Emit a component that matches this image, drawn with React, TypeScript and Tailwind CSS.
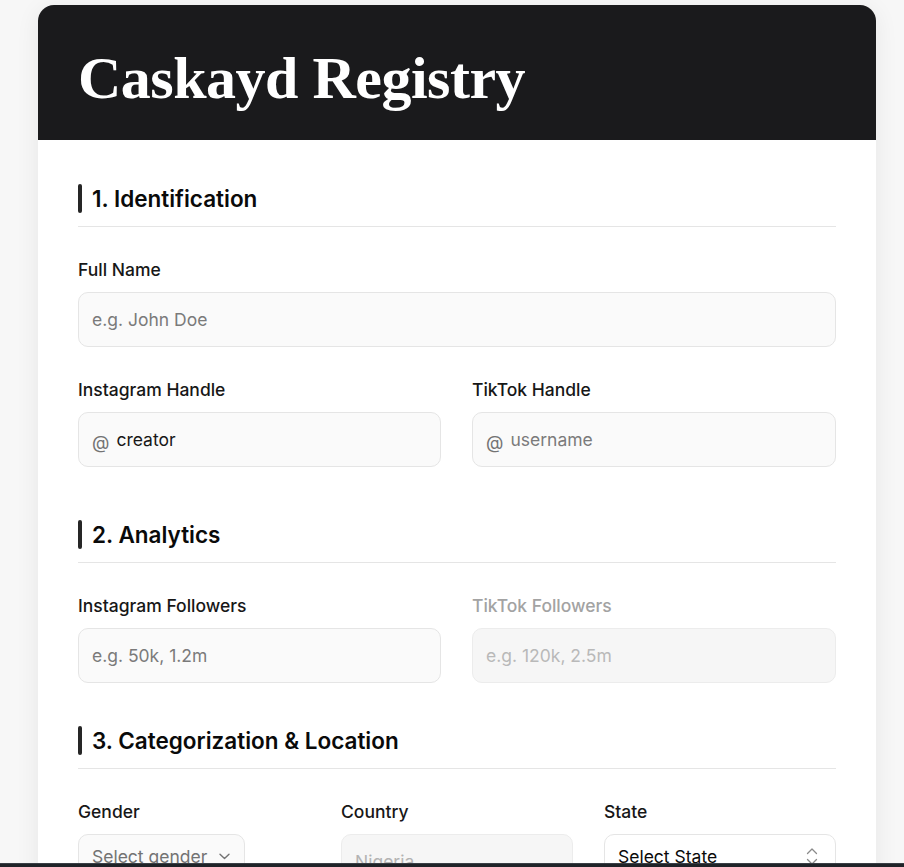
import React from "react";

function SectionHeading({ title }: { title: string }) {
  return (
    <div className="flex items-center gap-[10px] border-b border-[#e5e5e5] pb-[13px]">
      <span className="block h-[29px] w-[4px] rounded-full bg-[#262626]" />
      <h2 className="text-[22.5px] font-semibold leading-[29px] text-[#0a0a0a]">{title}</h2>
    </div>
  );
}

function Label({ children, muted }: { children: React.ReactNode; muted?: boolean }) {
  return (
    <label
      className={
        muted
          ? "block text-[17.5px] font-medium leading-6 text-[#a3a3a3]"
          : "block text-[17.5px] font-medium leading-6 text-[#171717]"
      }
    >
      {children}
    </label>
  );
}

function TextField({
  label,
  placeholder,
  value,
  prefix,
  disabled,
}: {
  label: string;
  placeholder: string;
  value?: string;
  prefix?: boolean;
  disabled?: boolean;
}) {
  return (
    <div>
      <Label muted={disabled}>{label}</Label>
      <div
        className={
          disabled
            ? "mt-[10px] flex h-[55px] items-center rounded-[10px] border border-[#ececec] bg-[#f6f6f6] px-[13px]"
            : "mt-[10px] flex h-[55px] items-center rounded-[10px] border border-[#e5e5e5] bg-[#fafafa] px-[13px]"
        }
      >
        {prefix && (
          <span className="mr-[7px] translate-y-[3px] text-[18px] leading-6 text-[#737373]">@</span>
        )}
        <input
          readOnly
          disabled={disabled}
          defaultValue={value}
          placeholder={placeholder}
          className={
            disabled
              ? "w-full bg-transparent text-[17.5px] leading-6 text-[#171717] outline-none placeholder:text-[#b9b9b9]"
              : "w-full bg-transparent text-[17.5px] leading-6 text-[#171717] outline-none placeholder:text-[#7a7a7a]"
          }
        />
      </div>
    </div>
  );
}

export default function App() {
  return (
    <div
      className="min-h-screen bg-[#f7f7f7] pb-10 pl-[38px] pt-[5px]"
      style={{ fontFamily: "Inter, 'Noto Sans', sans-serif" }}
    >
      <div className="w-[838px] overflow-hidden rounded-2xl bg-white shadow-[0_4px_24px_rgba(0,0,0,0.07)]">
        <header className="bg-[#1a1a1c] px-10 pb-[32px] pt-[43px]">
          <h1 className="font-['Liberation_Serif',serif] text-[60px] font-bold leading-[60px] tracking-[-0.5px] text-white">
            Caskayd Registry
          </h1>
        </header>

        <div className="px-10 pb-10 pt-[44px]">
          {/* Section 1 */}
          <section className="mb-[53px]">
            <SectionHeading title="1. Identification" />
            <div className="mt-[31px] flex flex-col gap-[31px]">
              <TextField label="Full Name" placeholder="e.g. John Doe" />
              <div className="grid grid-cols-[363px_1fr] gap-[31px]">
                <TextField label="Instagram Handle" placeholder="creator" value="creator" prefix />
                <TextField label="TikTok Handle" placeholder="username" prefix />
              </div>
            </div>
          </section>

          {/* Section 2 */}
          <section className="mb-[43px]">
            <SectionHeading title="2. Analytics" />
            <div className="mt-[31px] grid grid-cols-[363px_1fr] gap-[31px]">
              <TextField label="Instagram Followers" placeholder="e.g. 50k, 1.2m" />
              <TextField label="TikTok Followers" placeholder="e.g. 120k, 2.5m" disabled />
            </div>
          </section>

          {/* Section 3 */}
          <section>
            <SectionHeading title="3. Categorization & Location" />
            <div className="mt-[31px] grid grid-cols-3 gap-[31px]">
              <div>
                <Label>Gender</Label>
                <div className="mt-[10px] flex h-[45px] w-[167px] items-center justify-between rounded-[10px] border border-[#e5e5e5] bg-[#fafafa] pl-[13px] pr-[14px]">
                  <span className="text-[17.5px] leading-6 text-[#737373]">Select gender</span>
                  <svg width="11" height="7" viewBox="0 0 11 7" fill="none">
                    <path d="M1 1.2 L5.5 5.5 L10 1.2" stroke="#737373" strokeWidth="1.4" strokeLinecap="round" strokeLinejoin="round" />
                  </svg>
                </div>
              </div>
              <div>
                <Label>Country</Label>
                <div className="mt-[10px] flex h-[55px] items-center rounded-[10px] border border-[#ececec] bg-[#f6f6f6] px-[13px]">
                  <span className="text-[17.5px] leading-6 text-[#b3b3b3]">Nigeria</span>
                </div>
              </div>
              <div>
                <Label>State</Label>
                <div className="mt-[10px] flex h-[45px] items-center justify-between rounded-[10px] border border-[#e5e5e5] bg-white pl-[13px] pr-[17px]">
                  <span className="text-[17.5px] leading-6 text-[#0a0a0a]">Select State</span>
                  <svg width="12" height="19" viewBox="0 0 12 19" fill="none">
                    <path d="M1.5 6.5 L6 2 L10.5 6.5" stroke="#8a8a8a" strokeWidth="1.3" strokeLinecap="round" strokeLinejoin="round" />
                    <path d="M1.5 12.5 L6 17 L10.5 12.5" stroke="#8a8a8a" strokeWidth="1.3" strokeLinecap="round" strokeLinejoin="round" />
                  </svg>
                </div>
              </div>
            </div>
          </section>

          <div className="h-[200px]" />
        </div>
      </div>

      <div className="fixed bottom-0 left-0 right-0 h-[4px] border-t border-[#3a3f45] bg-[#1f2328]" />
    </div>
  );
}
